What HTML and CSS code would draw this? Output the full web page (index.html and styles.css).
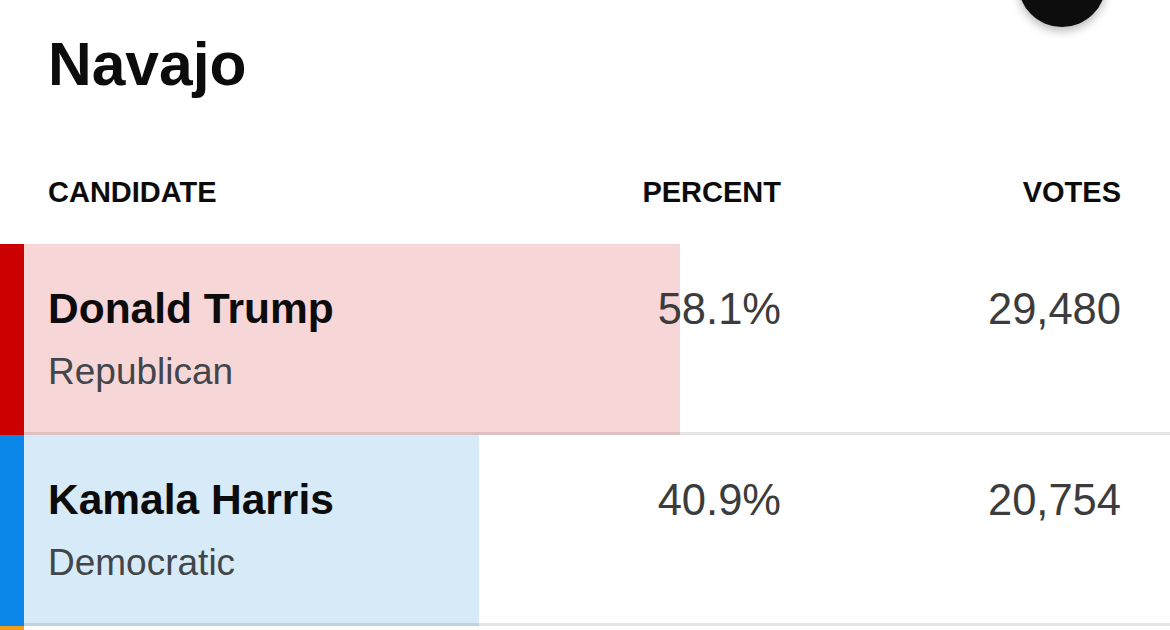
FILE: index.html
```html
<!DOCTYPE html>
<html lang="en">
<head>
    <meta charset="UTF-8">
    <meta name="viewport" content="width=device-width, initial-scale=1.0">
    <title>Navajo - Results</title>
    <link rel="stylesheet" href="styles.css">
</head>
<body>
    <button class="fab" aria-label="Menu"></button>

    <div class="county-header">
        <h1>Navajo</h1>
    </div>

    <div class="results-table">
        <div class="table-head">
            <span class="col-name">Candidate</span>
            <span class="col-num">Percent</span>
            <span class="col-num">Votes</span>
        </div>

        <div class="result-row">
            <div class="party-bar rep"></div>
            <div class="row-body rep-fill" style="--share: 57.24%">
                <div class="candidate">
                    <div class="candidate-name">Donald Trump</div>
                    <div class="candidate-party">Republican</div>
                </div>
                <div class="num">58.1%</div>
                <div class="num">29,480</div>
            </div>
        </div>

        <div class="result-row">
            <div class="party-bar dem"></div>
            <div class="row-body dem-fill" style="--share: 39.7%">
                <div class="candidate">
                    <div class="candidate-name">Kamala Harris</div>
                    <div class="candidate-party">Democratic</div>
                </div>
                <div class="num">40.9%</div>
                <div class="num">20,754</div>
            </div>
        </div>

        <div class="result-row">
            <div class="party-bar other"></div>
            <div class="row-body"></div>
        </div>
    </div>
</body>
</html>
```

FILE: styles.css
```css
:root {
    --ink: #0c0c0c;
    --grey-text: #3c3c3c;
    --party-text: #42454a;
    --rep: #cc0000;
    --rep-light: #f7d6d8;
    --dem: #0a87e8;
    --dem-light: #d7eaf8;
    --other: #f39c1a;
    --rule: rgba(0, 0, 0, 0.1);
}
body {
    margin: 0;
    font-family: 'Liberation Sans', Arial, Helvetica, sans-serif;
    color: var(--ink);
    background: white;
    overflow: hidden;
}
.fab {
    position: absolute;
    top: -61px;
    left: 1018px;
    width: 88px;
    height: 88px;
    border: none;
    border-radius: 50%;
    background: #0d0d0d;
    box-shadow: 0 4px 10px rgba(0,0,0,0.28);
}
.county-header {
    padding: 28px 48px 0;
}
h1 {
    margin: 0;
    font-size: 60.5px;
    line-height: 72px;
    font-weight: 700;
}
.table-head {
    display: grid;
    grid-template-columns: 1fr 220px 340px;
    margin-top: 75px;
    padding: 0 49px 34px 48px;
    font-size: 29px;
    line-height: 35px;
    font-weight: 700;
    text-transform: uppercase;
}
.col-num {
    text-align: right;
}
.result-row {
    display: flex;
}
.party-bar {
    width: 24px;
    flex: none;
}
.party-bar.rep {
    background: var(--rep);
}
.party-bar.dem {
    background: var(--dem);
}
.party-bar.other {
    background: var(--other);
}
.row-body {
    flex: 1;
    display: grid;
    grid-template-columns: 1fr 196px 340px;
    align-items: start;
    min-height: 20px;
    padding: 40px 49px 39px 24px;
    border-bottom: 3px solid var(--rule);
    --fill: transparent;
    --share: 0%;
    background: linear-gradient(to right, var(--fill) var(--share), transparent var(--share));
}
.result-row:first-of-type .row-body {
    border-top: 3px solid var(--rule);
}
.rep-fill {
    --fill: var(--rep-light);
}
.dem-fill {
    --fill: var(--dem-light);
}
.candidate-name {
    font-size: 42.5px;
    line-height: 50px;
    font-weight: 700;
}
.candidate-party {
    margin-top: 16px;
    font-size: 37px;
    line-height: 43px;
    color: var(--party-text);
}
.num {
    font-size: 43.5px;
    line-height: 50px;
    text-align: right;
    color: var(--grey-text);
}
```
